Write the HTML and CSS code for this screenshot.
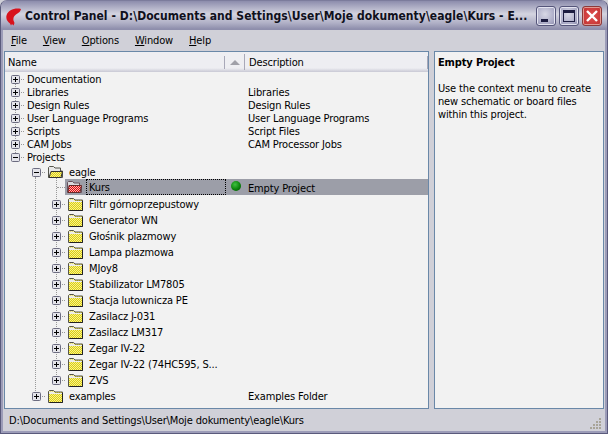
FILE: index.html
```html
<!DOCTYPE html>
<html lang="en">
<head>
    <meta charset="UTF-8">
    <title>Control Panel</title>
    <link rel="stylesheet" href="styles.css">
</head>
<body>
    <svg class="defs" width="0" height="0">
        <symbol id="plus" viewBox="0 0 16 9">
            <rect x="0.5" y="0.5" width="8" height="8" rx="1" fill="#e4e4ea" stroke="#6c6c80"/>
            <path d="M2 4.5h5M4.5 2v5" stroke="#000"/>
            <path d="M10 4.5h1M12 4.5h1" stroke="#999"/>
        </symbol>
        <symbol id="minus" viewBox="0 0 16 9">
            <rect x="0.5" y="0.5" width="8" height="8" rx="1" fill="#e4e4ea" stroke="#6c6c80"/>
            <path d="M2 4.5h5" stroke="#000"/>
            <path d="M10 4.5h1M12 4.5h1" stroke="#999"/>
        </symbol>
        <pattern id="dither" width="2" height="2" patternUnits="userSpaceOnUse">
            <rect width="2" height="2" fill="#f8f488"/>
            <rect width="1" height="1" fill="#dccc18"/>
            <rect x="1" y="1" width="1" height="1" fill="#dccc18"/>
        </pattern>
        <pattern id="ditherRed" width="2" height="2" patternUnits="userSpaceOnUse">
            <rect width="2" height="2" fill="#f8b4b4"/>
            <rect width="1" height="1" fill="#e00808"/>
            <rect x="1" y="1" width="1" height="1" fill="#e00808"/>
        </pattern>
        <symbol id="folder" viewBox="0 0 15 14">
            <path d="M.5 13.500v-11l1-1h4l1.500 1.500h7.500v10.500z" fill="url(#dither)" stroke="#55554c"/>
            <path d="M1 2.500h4.500l1 1.500h8v1h-13.500z" fill="#ececec"/>
            <path d="M14.500 4v9.500h-13" fill="none" stroke="#222"/>
        </symbol>
        <symbol id="folderOpen" viewBox="0 0 15 14">
            <path d="M.5 12.500v-10l1-1h4l1.500 1.500h5.500v3h2v6.500z" fill="#e8e8e8" stroke="#55554c"/>
            <path d="M3 6.500h11.500l-1.500 6h-12z" fill="url(#dither)" stroke="#333"/>
        </symbol>
        <symbol id="folderRed" viewBox="0 0 15 14">
            <path d="M.5 12.500v-10l1-1h4l1.500 1.500h5.500v3h2v6.500z" fill="#d8d8dc" stroke="#66505a"/>
            <path d="M2 5.500h12.500l-1.500 7h-12z" fill="url(#ditherRed)" stroke="#662a2a"/>
        </symbol>
    </svg>

    <div class="window">
        <div class="titlebar">
            <svg class="logo" width="16" height="18" viewBox="0 0 16 18">
                <path d="M15 1C9-.5 2 2 .5 7.500c-.8 3.500 1 6 3.500 8l1 2 1-1.500 1.500 1.500 1-2.500-1-2.500C7 10 8 8 10 6.500c2-1.500 4-2 5-5.500z" fill="#d8121c"/>
            </svg>
            <span class="title">Control Panel - D:\Documents and Settings\User\Moje dokumenty\eagle\Kurs - E...</span>
            <div class="winbtns">
                <span class="winbtn"><span class="ico-min"></span></span>
                <span class="winbtn"><span class="ico-max"></span></span>
                <span class="winbtn close">
                    <svg width="14" height="14" viewBox="0 0 14 14"><path d="M2 2l10 10M12 2L2 12" stroke="#fff" stroke-width="2.400"/></svg>
                </span>
            </div>
        </div>

        <div class="menubar">
            <span class="menu"><u>F</u>ile</span>
            <span class="menu"><u>V</u>iew</span>
            <span class="menu"><u>O</u>ptions</span>
            <span class="menu"><u>W</u>indow</span>
            <span class="menu"><u>H</u>elp</span>
        </div>

        <div class="main">
            <div class="pane left">
                <div class="header">
                    <span class="col-name">Name</span>
                    <span class="col-sort"><span class="sort-arrow"></span></span>
                    <span class="col-desc">Description</span>
                </div>
                <div class="tree">
                    <span class="vline v0"></span>
                    <span class="vline v1"></span>
                    <span class="vline v2"></span>

                    <div class="row small"><span class="name"><svg class="exp"><use href="#plus"/></svg><span class="label">Documentation</span></span></div>
                    <div class="row small"><span class="name"><svg class="exp"><use href="#plus"/></svg><span class="label">Libraries</span></span><span class="status"></span><span class="desc">Libraries</span></div>
                    <div class="row small"><span class="name"><svg class="exp"><use href="#plus"/></svg><span class="label">Design Rules</span></span><span class="status"></span><span class="desc">Design Rules</span></div>
                    <div class="row small"><span class="name"><svg class="exp"><use href="#plus"/></svg><span class="label">User Language Programs</span></span><span class="status"></span><span class="desc">User Language Programs</span></div>
                    <div class="row small"><span class="name"><svg class="exp"><use href="#plus"/></svg><span class="label">Scripts</span></span><span class="status"></span><span class="desc">Script Files</span></div>
                    <div class="row small"><span class="name"><svg class="exp"><use href="#plus"/></svg><span class="label">CAM Jobs</span></span><span class="status"></span><span class="desc">CAM Processor Jobs</span></div>
                    <div class="row small"><span class="name"><svg class="exp"><use href="#minus"/></svg><span class="label">Projects</span></span></div>

                    <div class="row lvl1"><span class="name"><svg class="exp"><use href="#minus"/></svg><svg class="folder"><use href="#folderOpen"/></svg><span class="label">eagle</span></span></div>

                    <div class="row lvl2 selected">
                        <span class="name"><svg class="folder"><use href="#folderRed"/></svg><span class="label focus">Kurs</span></span>
                        <span class="status"><span class="ball"></span></span>
                        <span class="desc">Empty Project</span>
                    </div>
                    <div class="row lvl2"><span class="name"><svg class="exp"><use href="#plus"/></svg><svg class="folder"><use href="#folder"/></svg><span class="label">Filtr górnoprzepustowy</span></span></div>
                    <div class="row lvl2"><span class="name"><svg class="exp"><use href="#plus"/></svg><svg class="folder"><use href="#folder"/></svg><span class="label">Generator WN</span></span></div>
                    <div class="row lvl2"><span class="name"><svg class="exp"><use href="#plus"/></svg><svg class="folder"><use href="#folder"/></svg><span class="label">Głośnik plazmowy</span></span></div>
                    <div class="row lvl2"><span class="name"><svg class="exp"><use href="#plus"/></svg><svg class="folder"><use href="#folder"/></svg><span class="label">Lampa plazmowa</span></span></div>
                    <div class="row lvl2"><span class="name"><svg class="exp"><use href="#plus"/></svg><svg class="folder"><use href="#folder"/></svg><span class="label">MJoy8</span></span></div>
                    <div class="row lvl2"><span class="name"><svg class="exp"><use href="#plus"/></svg><svg class="folder"><use href="#folder"/></svg><span class="label">Stabilizator LM7805</span></span></div>
                    <div class="row lvl2"><span class="name"><svg class="exp"><use href="#plus"/></svg><svg class="folder"><use href="#folder"/></svg><span class="label">Stacja lutownicza PE</span></span></div>
                    <div class="row lvl2"><span class="name"><svg class="exp"><use href="#plus"/></svg><svg class="folder"><use href="#folder"/></svg><span class="label">Zasilacz J-031</span></span></div>
                    <div class="row lvl2"><span class="name"><svg class="exp"><use href="#plus"/></svg><svg class="folder"><use href="#folder"/></svg><span class="label">Zasilacz LM317</span></span></div>
                    <div class="row lvl2"><span class="name"><svg class="exp"><use href="#plus"/></svg><svg class="folder"><use href="#folder"/></svg><span class="label">Zegar IV-22</span></span></div>
                    <div class="row lvl2"><span class="name"><svg class="exp"><use href="#plus"/></svg><svg class="folder"><use href="#folder"/></svg><span class="label">Zegar IV-22 (74HC595, S...</span></span></div>
                    <div class="row lvl2"><span class="name"><svg class="exp"><use href="#plus"/></svg><svg class="folder"><use href="#folder"/></svg><span class="label">ZVS</span></span></div>

                    <div class="row lvl1"><span class="name"><svg class="exp"><use href="#plus"/></svg><svg class="folder"><use href="#folder"/></svg><span class="label">examples</span></span><span class="status"></span><span class="desc">Examples Folder</span></div>
                </div>
            </div>

            <div class="pane right">
                <h1>Empty Project</h1>
                <p>Use the context menu to create new schematic or board files within this project.</p>
            </div>
        </div>

        <div class="statusbar">
            <span>D:\Documents and Settings\User\Moje dokumenty\eagle\Kurs</span>
            <svg class="grip" width="12" height="12" viewBox="0 0 12 12">
                <path d="M9 1h2v2H9zM6 4h2v2H6zM9 4h2v2H9zM3 7h2v2H3zM6 7h2v2H6zM9 7h2v2H9zM0 10h2v2H0zM3 10h2v2H3zM6 10h2v2H6zM9 10h2v2H9z" fill="#a8a498"/>
            </svg>
        </div>
    </div>
</body>
</html>
```

FILE: styles.css
```css
html, body {
    margin: 0;
    padding: 0;
}
body {
    width: 608px;
    height: 434px;
    overflow: hidden;
    font-family: "DejaVu Sans Condensed", "DejaVu Sans", sans-serif;
    font-size: 11px;
    letter-spacing: -0.15px;
    color: #000;
    background-color: #d0d0d8;
}
.defs {
    position: absolute;
}
.window {
    box-sizing: border-box;
    width: 608px;
    height: 434px;
    display: flex;
    flex-direction: column;
    background-color: #d0d0d8;
    border: 1px solid #5a5a7c;
    border-top-color: #7c7c9c;
    border-radius: 7px 7px 0 0;
    box-shadow: inset 0 0 0 2px #9c9cb8;
}

/* title bar */
.titlebar {
    height: 29px;
    flex: none;
    display: flex;
    align-items: center;
    padding: 0 5px;
    background: linear-gradient(#8c8cac 0, #a8a8c0 5px, #d4d4e0 13px, #b0b0c6 22px, #8e8eac 28px);
    border-radius: 6px 6px 0 0;
}
.logo {
    flex: none;
    margin-top: 2px;
}
.title {
    flex: 1;
    min-width: 0;
    margin-left: 3px;
    font-size: 12px;
    font-weight: bold;
    white-space: nowrap;
    letter-spacing: 0.05px;
    color: #10101c;
}
.winbtns {
    flex: none;
    display: flex;
    gap: 3px;
}
.winbtn {
    box-sizing: border-box;
    width: 20px;
    height: 20px;
    display: flex;
    align-items: center;
    justify-content: center;
    border: 1px solid #55557a;
    border-radius: 3px;
    background: radial-gradient(circle at 45% 40%, #d8d8e6, #a8a8c4 70%, #8484a8);
    box-shadow: inset 0 0 0 1px #e4e4f0;
}
.winbtn.close {
    border-color: #8c3a3a;
    background: radial-gradient(circle at 50% 50%, #e05050, #c03030);
    box-shadow: inset 0 0 0 1px #e09a92;
}
.ico-min {
    width: 7px;
    height: 3px;
    background-color: #1c1c40;
    margin-top: 9px;
    margin-right: 3px;
}
.ico-max {
    box-sizing: border-box;
    width: 12px;
    height: 12px;
    border: 1px solid #1c1c40;
    border-top-width: 3px;
}

/* menu */
.menubar {
    height: 21px;
    flex: none;
    display: flex;
    align-items: center;
    margin: 0 3px;
    padding-left: 7px;
    gap: 16px;
    background-color: #d0d0d8;
}

/* panes */
.main {
    flex: 1;
    min-height: 0;
    display: flex;
    gap: 5px;
    margin: 0 3px;
}
.pane {
    box-sizing: border-box;
    border: 1px solid #6a88a8;
    background-color: #f2f2f2;
}
.left {
    width: 425px;
    display: flex;
    flex-direction: column;
}
.right {
    flex: 1;
    padding: 4px 3px;
}
.right h1 {
    margin: 0 0 13px 0;
    font-size: 11px;
    font-weight: bold;
    line-height: 13px;
}
.right p {
    margin: 0;
    line-height: 13px;
}

/* list header */
.header {
    height: 20px;
    flex: none;
    display: flex;
    align-items: center;
    background: linear-gradient(#eeeef2, #eeeef2 80%, #c8c8d4);
}
.col-name {
    box-sizing: border-box;
    width: 220px;
    padding-left: 3px;
    border-right: 1px solid #a8a8b8;
}
.col-sort {
    box-sizing: border-box;
    width: 20px;
    height: 16px;
    display: flex;
    align-items: center;
    justify-content: center;
    border-right: 1px solid #a8a8b8;
}
.sort-arrow {
    width: 0;
    height: 0;
    border-left: 5px solid transparent;
    border-right: 5px solid transparent;
    border-bottom: 5px solid #a0a0a8;
}
.col-desc {
    padding-left: 4px;
    flex: 1;
    border-right: 1px solid #a8a8b8;
}

/* tree */
.tree {
    position: relative;
    flex: 1;
}
.vline {
    position: absolute;
    width: 0;
    border-left: 1px dotted #999;
}
.v0 {
    left: 10px;
    top: 12px;
    height: 73px;
}
.v1 {
    left: 30px;
    top: 105px;
    height: 214px;
}
.v2 {
    left: 51px;
    top: 106px;
    height: 197px;
}
.row {
    box-sizing: border-box;
    position: relative;
    display: flex;
    align-items: center;
    height: 16px;
    padding-top: 2px;
    white-space: nowrap;
}
.row.small {
    height: 13px;
}
.name {
    box-sizing: border-box;
    width: 221px;
    display: flex;
    align-items: center;
    flex: none;
}
.small .name {
    padding-left: 6px;
}
.lvl1 .name {
    padding-left: 27px;
}
.lvl2 .name {
    padding-left: 47px;
}
.exp {
    width: 16px;
    height: 9px;
    flex: none;
}
.folder {
    width: 15px;
    height: 14px;
    flex: none;
    margin-right: 6px;
}
.selected {
    padding-top: 0;
    background: linear-gradient(to right, transparent 60px, #9c9ea8 60px);
}
.selected::before {
    content: "";
    position: absolute;
    left: 52px;
    top: 8px;
    width: 8px;
    border-top: 1px dotted #999;
}
.selected .name {
    padding-left: 62px;
}
.selected .label {
    flex: 1;
}
.selected .desc {
    margin-top: 2px;
}
.focus {
    box-sizing: border-box;
    height: 16px;
    line-height: 13px;
    margin-left: -2px;
    padding: 1px 0 0 2px;
    border: 1px dotted #000;
}
.status {
    width: 22px;
    flex: none;
    display: flex;
    justify-content: center;
}
.ball {
    width: 10px;
    height: 10px;
    margin-left: -2px;
    margin-top: -2px;
    border-radius: 50%;
    background: radial-gradient(circle at 40% 35%, #40c040, #0c840c 55%, #004c00);
}

/* status bar */
.statusbar {
    height: 19px;
    flex: none;
    display: flex;
    align-items: center;
    justify-content: space-between;
    margin: 0 3px 3px;
    padding: 2px 2px 0 5px;
    background-color: #d0d0d8;
}
.grip {
    margin-top: 4px;
}
```
